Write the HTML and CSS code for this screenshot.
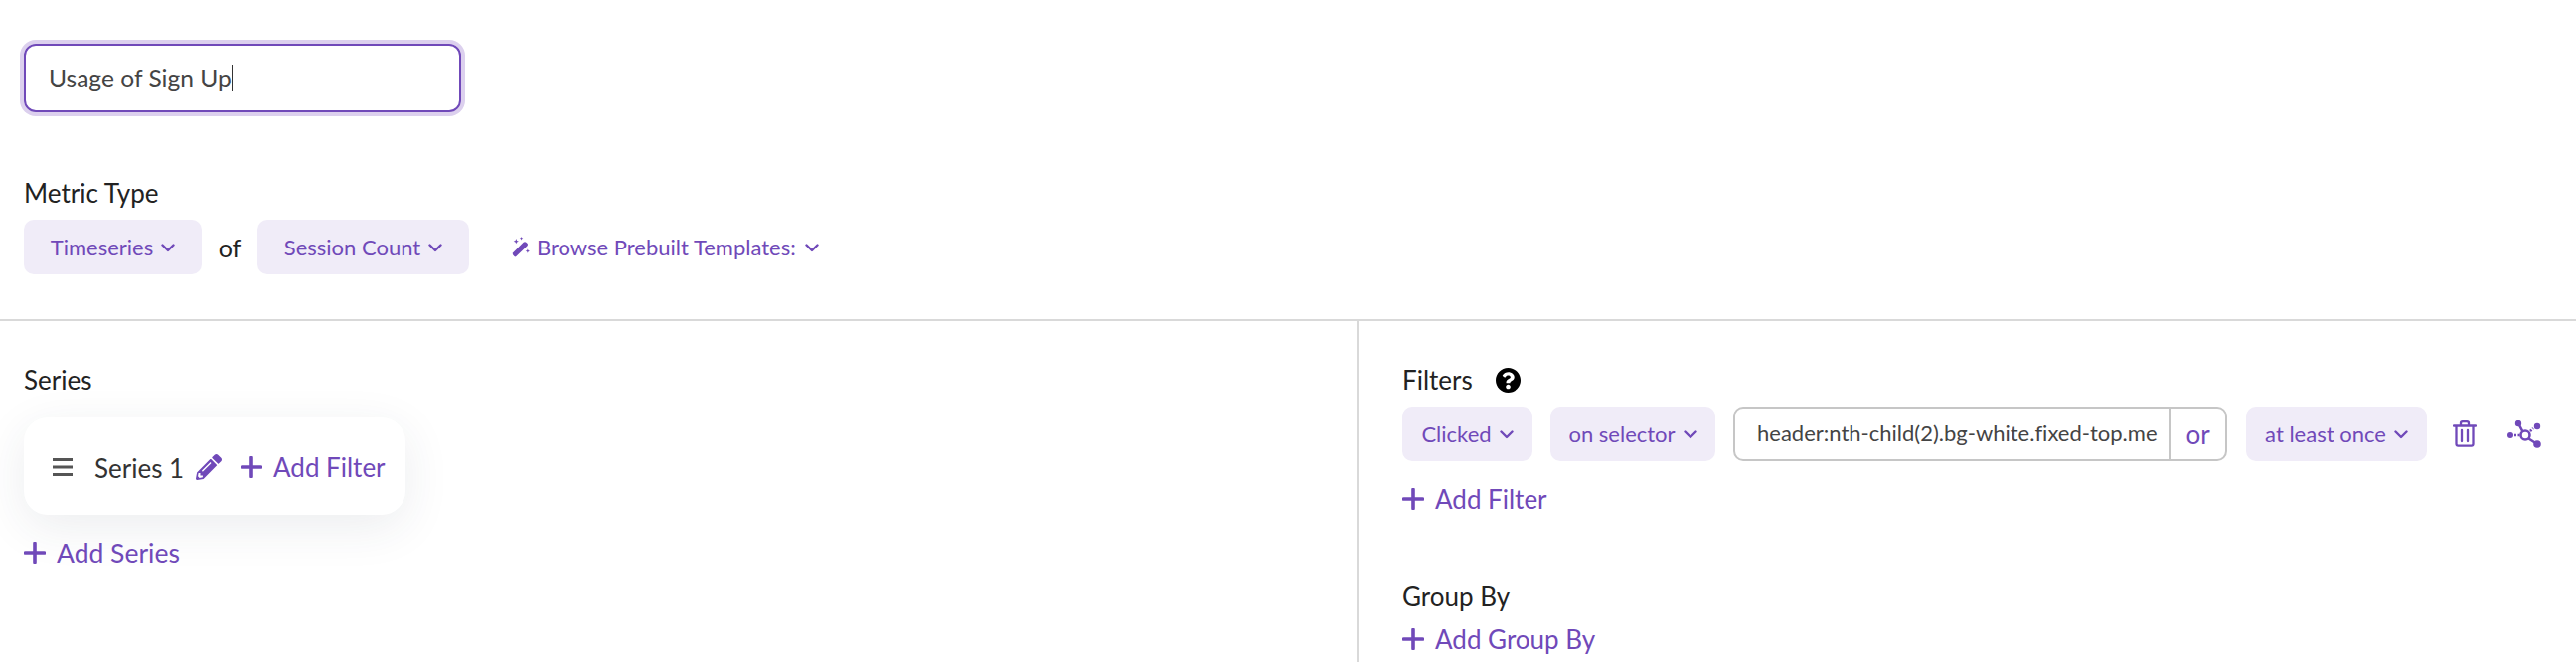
FILE: index.html
```html
<!DOCTYPE html>
<html lang="en">
<head>
<meta charset="utf-8">
<title>Usage of Sign Up</title>
<link rel="stylesheet" href="styles.css">
</head>
<body>
<svg class="defs" width="0" height="0" aria-hidden="true">
  <symbol id="chev" viewBox="0 0 14 9"><path d="M1.500 1.500 7 7l5.500-5.500" fill="none" stroke="currentColor" stroke-width="2.400" stroke-linecap="round" stroke-linejoin="round"/></symbol>
  <symbol id="plus" viewBox="0 0 22 22"><path d="M11 1.500v19M1.500 11h19" fill="none" stroke="currentColor" stroke-width="3.600" stroke-linecap="round"/></symbol>
</svg>
<main class="page">
  <section class="head">
    <div class="title-input"><span>Usage of Sign Up</span><i class="caret"></i></div>
    <div class="label metric-label">Metric Type</div>
    <div class="metric-row">
      <button class="pill pill-ts">Timeseries <svg class="chev"><use href="#chev"/></svg></button>
      <span class="of">of</span>
      <button class="pill pill-sc">Session Count <svg class="chev"><use href="#chev"/></svg></button>
      <button class="browse">
        <svg class="wand" viewBox="0 0 20 20"><path d="M3 17.500 2.500 16 13 5.500c.8-.8 1.800-.8 2.500-.1l1.100 1.100c.7.700.7 1.700-.1 2.500L6 19c-.6.600-1.200.500-1.700 0z" fill="currentColor"/><path d="M6 2l.7 1.800L8.500 4.500l-1.800.7L6 7l-.7-1.800-1.800-.7 1.800-.7zM11 0l.5 1.200 1.200.5-1.200.5-.5 1.200-.5-1.200-1.200-.5 1.200-.5zM17 12l.6 1.400 1.400.6-1.400.6-.6 1.400-.6-1.400-1.400-.6 1.400-.6z" fill="currentColor"/></svg>
        <span>Browse Prebuilt Templates:</span>
        <svg class="chev"><use href="#chev"/></svg>
      </button>
    </div>
  </section>
  <section class="panels">
    <div class="left">
      <div class="label">Series</div>
      <div class="card">
        <svg class="burger" viewBox="0 0 20 18"><path d="M0 0h20v3H0zM0 7.500h20v3H0zM0 15h20v3H0z" fill="#555"/></svg>
        <span class="series-name">Series 1</span>
        <svg class="pencil" viewBox="0 0 512 512"><path fill="currentColor" d="M497.900 142.100l-46.100 46.100c-4.700 4.700-12.300 4.700-17 0l-111-111c-4.700-4.700-4.700-12.300 0-17l46.100-46.100c18.700-18.700 49.100-18.700 67.900 0l60.100 60.100c18.800 18.700 18.800 49.100 0 67.900zM284.200 99.800L21.600 362.400.4 483.900c-2.900 16.400 11.400 30.600 27.800 27.800l121.500-21.300 262.600-262.600c4.700-4.700 4.700-12.300 0-17l-111-111c-4.800-4.700-12.400-4.700-17.100 0zM124.100 339.900c-5.500-5.500-5.500-14.300 0-19.800l154-154c5.500-5.500 14.300-5.500 19.800 0s5.500 14.300 0 19.800l-154 154c-5.500 5.500-14.300 5.500-19.800 0zM88 424h48v36.300l-64.500 11.300-31.100-31.100L51.700 376H88v48z"/></svg>
        <button class="add card-add"><svg class="plus"><use href="#plus"/></svg>Add Filter</button>
      </div>
      <button class="add add-series"><svg class="plus"><use href="#plus"/></svg>Add Series</button>
    </div>
    <div class="right">
      <div class="label filters-label">Filters
        <svg class="help" viewBox="8 8 496 496"><path d="M504 256c0 136.997-111.043 248-248 248S8 392.997 8 256C8 119.083 119.043 8 256 8s248 111.083 248 248zM262.655 90c-54.497 0-89.255 22.957-116.549 63.758-3.536 5.286-2.353 12.415 2.715 16.258l34.699 26.310c5.205 3.947 12.621 3.008 16.665-2.122 17.864-22.658 30.113-35.797 57.303-35.797 20.429 0 45.698 13.148 45.698 32.958 0 14.976-12.363 22.667-32.534 33.976C247.128 238.528 216 254.941 216 296v4c0 6.627 5.373 12 12 12h56c6.627 0 12-5.373 12-12v-1.333c0-28.462 83.186-29.647 83.186-106.667 0-58.002-60.165-102-116.531-102zM256 338c-25.365 0-46 20.635-46 46 0 25.364 20.635 46 46 46s46-20.636 46-46c0-25.365-20.635-46-46-46z"/></svg>
      </div>
      <div class="filter-row">
        <button class="pill pill-clicked">Clicked <svg class="chev"><use href="#chev"/></svg></button>
        <button class="pill pill-on">on selector <svg class="chev"><use href="#chev"/></svg></button>
        <div class="selector"><span class="selector-text">header:nth-child(2).bg-white.fixed-top.me</span><span class="or">or</span></div>
        <button class="pill pill-once">at least once <svg class="chev"><use href="#chev"/></svg></button>
        <svg class="trash" viewBox="0 0 24 27"><path d="M1 5.500h22M8 5V2.800C8 1.800 8.800 1.200 9.800 1.200h4.400c1 0 1.800.6 1.800 1.600V5M3.500 5.500v18.300c0 1 .8 1.800 1.800 1.800h13.400c1 0 1.800-.8 1.800-1.800V5.500" fill="none" stroke="currentColor" stroke-width="2.300" stroke-linecap="round"/><path d="M9 10v11M15 10v11" fill="none" stroke="currentColor" stroke-width="2.300" stroke-linecap="round"/></svg>
        <svg class="graph" viewBox="0 0 34 28"><g fill="currentColor"><circle cx="3" cy="15" r="3"/><circle cx="11" cy="3" r="3.200"/><circle cx="30" cy="6" r="3.200"/><circle cx="30" cy="24" r="3.800"/></g><g fill="none" stroke="currentColor" stroke-width="2.600"><circle cx="18" cy="15" r="4.500"/><path d="M11 3l4.500 8.500M21.500 18.500 30 24"/><path d="M7 15h6M23 11l3-3" stroke-dasharray="2 1.500"/></g></svg>
      </div>
      <button class="add filter-add"><svg class="plus"><use href="#plus"/></svg>Add Filter</button>
      <div class="label group-label">Group By</div>
      <button class="add group-add"><svg class="plus"><use href="#plus"/></svg>Add Group By</button>
    </div>
  </section>
</main>
</body>
</html>
```

FILE: styles.css
```css
* { box-sizing: border-box; }
html, body { margin: 0; padding: 0; background: #fff; }
body { font-family: Lato, "Open Sans", sans-serif; font-variant-ligatures: none; color: #222; overflow: hidden; height: 666px; }
.defs { position: absolute; }
button { font: inherit; font-variant-ligatures: none; border: 0; background: none; padding: 0; margin: 0; cursor: pointer; }
.page { width: 2592px; height: 666px; overflow: hidden; }

.head { padding: 44px 0 0 24px; border-bottom: 2px solid #d9d9d9; box-sizing: content-box; height: 277px; }
.title-input { width: 440px; height: 69px; border: 2.500px solid #7049b9; border-radius: 12px; box-shadow: 0 0 0 4px #dcd0ee; display: flex; align-items: center; padding-left: 23px; font-size: 24.600px; color: #444; }
.caret { width: 1.500px; height: 27px; background: #333; }

.label { font-size: 26px; line-height: 30px; color: #222; }
.metric-label { margin-top: 66px; }
.metric-row { display: flex; align-items: center; margin-top: 12px; }

.pill { height: 55px; background: #f0ecf8; border-radius: 10px; color: #7049b9; font-size: 22px; display: inline-flex; align-items: center; justify-content: center; gap: 8px; white-space: nowrap; }
.chev { width: 14px; height: 9px; color: #7049b9; margin-top: 2px; }
.pill-ts { width: 179px; }
.of { width: 56px; text-align: center; font-size: 25px; color: #222; }
.pill-sc { width: 213px; }
.browse { margin-left: 41px; color: #7049b9; font-size: 22px; display: inline-flex; align-items: center; gap: 6px; }
.wand { width: 21px; height: 21px; }
.browse .chev { margin-left: 3px; }

.panels { display: grid; grid-template-columns: 1367px 1fr; height: 343px; }
.left { border-right: 2px solid #d9d9d9; padding: 44px 0 0 24px; }
.right { padding: 44px 0 0 44px; }

.card { width: 384px; height: 98px; margin-top: 23px; border-radius: 24px; background: #fff; box-shadow: 0 12px 48px rgba(40, 50, 80, .09); display: flex; align-items: center; padding-left: 29px; padding-top: 2px; }
.burger { width: 20px; height: 18px; margin-right: 22px; margin-top: 0; }
.series-name { font-size: 26px; color: #333; width: 102px; flex: none; margin-top: 2px; }
.pencil { width: 26px; height: 26px; color: #7049b9; margin-top: -1px; }
.card-add { margin-left: 19px; font-size: 25.500px; }

.add { display: flex; align-items: center; gap: 11px; color: #7049b9; font-size: 26px; line-height: 30px; white-space: nowrap; }
.plus { width: 22px; height: 22px; color: #7049b9; flex: none; }
.add-series { margin-top: 23px; font-size: 26.500px; }

.filters-label { display: flex; align-items: center; gap: 23px; }
.help { width: 25px; height: 25px; fill: #000; }
.filter-row { display: flex; align-items: center; margin-top: 12px; }
.pill-clicked { width: 131px; }
.pill-on { width: 166px; margin-left: 18px; }
.selector { width: 497px; height: 55px; margin-left: 18px; border: 2.500px solid #c6c6c6; border-radius: 10px; display: flex; align-items: center; font-size: 22px; color: #444; overflow: hidden; }
.selector-text { width: 438px; flex: none; padding-left: 22px; white-space: nowrap; overflow: hidden; height: 100%; line-height: 50px; border-right: 2px solid #c6c6c6; }
.or { flex: 1; text-align: center; color: #7049b9; font-size: 26px; }
.pill-once { width: 182px; margin-left: 19px; }
.trash { width: 24px; height: 27px; color: #7049b9; margin-left: 26px; }
.graph { width: 34px; height: 28px; color: #7049b9; margin-left: 31px; }
.filter-add { margin-top: 23px; }
.group-label { margin-top: 68px; }
.group-add { margin-top: 13px; }
```
